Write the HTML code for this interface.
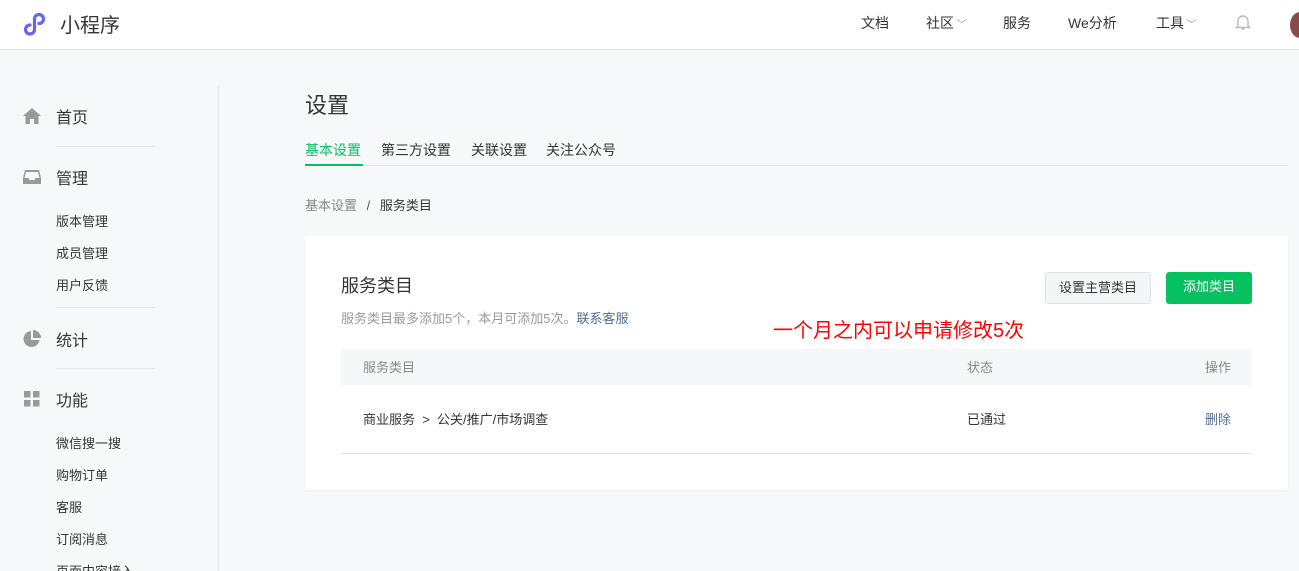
<!DOCTYPE html>
<html><head><meta charset="utf-8"><style>
*{margin:0;padding:0;box-sizing:border-box}
html,body{width:1299px;height:571px;overflow:hidden}
body{background:#f7f8fa;font-family:"Liberation Sans","Noto Sans CJK SC",sans-serif;color:#353535;position:relative}
.a{position:absolute;white-space:nowrap}
.hdr{position:absolute;left:0;top:0;width:1299px;height:50px;background:#fff;border-bottom:1px solid #e4e6ea}
.nav{font-size:14px;color:#353535;top:13px}
.side{font-size:16px;color:#353535}
.sub{font-size:13px;color:#353535}
.hr{position:absolute;left:56px;width:99px;height:1px;background:#e4e6ea}
</style></head><body>
<div class="hdr">
<svg class="a" style="left:24px;top:10px" width="28" height="26" viewBox="0 0 28 26"><path d="M6 15a4.5 4.5 0 1 0 4.5 4.5V9a4.5 4.5 0 1 1 4.5 4.5" fill="none" stroke="#6467f0" stroke-width="3.2" stroke-linecap="round"/></svg>
<div class="a" style="left:60px;top:9px;font-size:20px;color:#353535">小程序</div>
<div class="a nav" style="left:861px">文档</div>
<div class="a nav" style="left:926px">社区<span style="color:#999;font-size:10px"> ﹀</span></div>
<div class="a nav" style="left:1003px">服务</div>
<div class="a nav" style="left:1068px">We分析</div>
<div class="a nav" style="left:1156px">工具<span style="color:#999;font-size:10px"> ﹀</span></div>
<svg class="a" style="left:1235px;top:13px" width="16" height="18" viewBox="0 0 16 18"><path d="M3 13V8a5 5 0 0 1 10 0v5l1.5 1.5h-13z M6.5 16h3" fill="none" stroke="#bbb" stroke-width="1.4"/></svg>
<div class="a" style="left:1290px;top:12px;width:20px;height:26px;border-radius:50%;background:#8a4a4a"></div>
</div>
<div class="a" style="left:218px;top:86px;width:1px;height:485px;background:#e4e6ea"></div>
<svg class="a" style="left:23px;top:107px" width="18" height="18" viewBox="0 0 18 18"><path d="M9 1L0 9h2.5v8h4.5v-5h4v5h4.5V9H18z" fill="#9a9a9a"/></svg>
<div class="a side" style="left:56px;top:104px">首页</div>
<div class="hr" style="top:146px"></div>
<svg class="a" style="left:23px;top:169px" width="18" height="16" viewBox="0 0 18 16"><path d="M2 1h14l2 8v6H0V9z" fill="#9a9a9a"/><path d="M3 3h12l1.5 6H12v2H6V9H1.5z" fill="#f7f8fa"/></svg>
<div class="a side" style="left:56px;top:165px">管理</div>
<div class="a sub" style="left:56px;top:211px">版本管理</div>
<div class="a sub" style="left:56px;top:243px">成员管理</div>
<div class="a sub" style="left:56px;top:275px">用户反馈</div>
<div class="hr" style="top:307px"></div>
<svg class="a" style="left:23px;top:330px" width="18" height="18" viewBox="0 0 18 18"><path d="M8 1a8 8 0 1 0 8.5 9H8z" fill="#9a9a9a"/><path d="M10 0v8h8a8 8 0 0 0-8-8z" fill="#9a9a9a"/></svg>
<div class="a side" style="left:56px;top:327px">统计</div>
<div class="hr" style="top:368px"></div>
<svg class="a" style="left:24px;top:391px" width="16" height="16" viewBox="0 0 16 16"><rect x="0" y="0" width="6.5" height="6.5" fill="#9a9a9a"/><rect x="9" y="0" width="6.5" height="6.5" fill="#9a9a9a"/><rect x="0" y="9" width="6.5" height="6.5" fill="#9a9a9a"/><rect x="9" y="9" width="6.5" height="6.5" fill="#9a9a9a"/></svg>
<div class="a side" style="left:56px;top:387px">功能</div>
<div class="a sub" style="left:56px;top:433px">微信搜一搜</div>
<div class="a sub" style="left:56px;top:465px">购物订单</div>
<div class="a sub" style="left:56px;top:497px">客服</div>
<div class="a sub" style="left:56px;top:529px">订阅消息</div>
<div class="a sub" style="left:56px;top:561px">页面内容接入</div>

<div class="a" style="left:305px;top:88px;font-size:22px;color:#353535">设置</div>
<div class="a" style="left:305px;top:165px;width:983px;height:1px;background:#e0e2e6"></div>
<div class="a" style="left:305px;top:140px;font-size:14px;color:#07c160">基本设置</div>
<div class="a" style="left:305px;top:164px;width:58px;height:2px;background:#07c160"></div>
<div class="a" style="left:381px;top:140px;font-size:14px">第三方设置</div>
<div class="a" style="left:471px;top:140px;font-size:14px">关联设置</div>
<div class="a" style="left:546px;top:140px;font-size:14px">关注公众号</div>
<div class="a" style="left:305px;top:195px;font-size:13px;color:#888">基本设置 <span style="margin:0 6px;color:#555">/</span> <span style="color:#353535">服务类目</span></div>

<div class="a" style="left:305px;top:236px;width:983px;height:254px;background:#fff;border-radius:3px;box-shadow:0 1px 2px rgba(0,0,0,.05)"></div>
<div class="a" style="left:341px;top:272px;font-size:18px;color:#353535">服务类目</div>
<div class="a" style="left:341px;top:308px;font-size:13px;color:#9a9a9a">服务类目最多添加5个，本月可添加5次。<span style="color:#576b95">联系客服</span></div>
<div class="a" style="left:773px;top:314px;font-size:20px;color:#f00">一个月之内可以申请修改5次</div>
<div class="a" style="left:1045px;top:272px;width:106px;height:32px;border:1px solid #e0e0e0;border-radius:3px;background:#f4f5f7;font-size:13px;text-align:center;line-height:29px">设置主营类目</div>
<div class="a" style="left:1166px;top:272px;width:86px;height:32px;border-radius:3px;background:#07c160;color:#fff;font-size:13px;text-align:center;line-height:30px">添加类目</div>
<div class="a" style="left:341px;top:349px;width:911px;height:36px;background:#f6f7f9"></div>
<div class="a" style="left:363px;top:357px;font-size:13px;color:#888">服务类目</div>
<div class="a" style="left:967px;top:357px;font-size:13px;color:#888">状态</div>
<div class="a" style="left:1205px;top:357px;font-size:13px;color:#888">操作</div>
<div class="a" style="left:363px;top:409px;font-size:13px">商业服务 &nbsp;&gt;&nbsp; 公关/推广/市场调查</div>
<div class="a" style="left:967px;top:409px;font-size:13px">已通过</div>
<div class="a" style="left:1205px;top:409px;font-size:13px;color:#576b95">删除</div>
<div class="a" style="left:341px;top:453px;width:911px;height:1px;background:#e4e6ea"></div>
</body></html>
